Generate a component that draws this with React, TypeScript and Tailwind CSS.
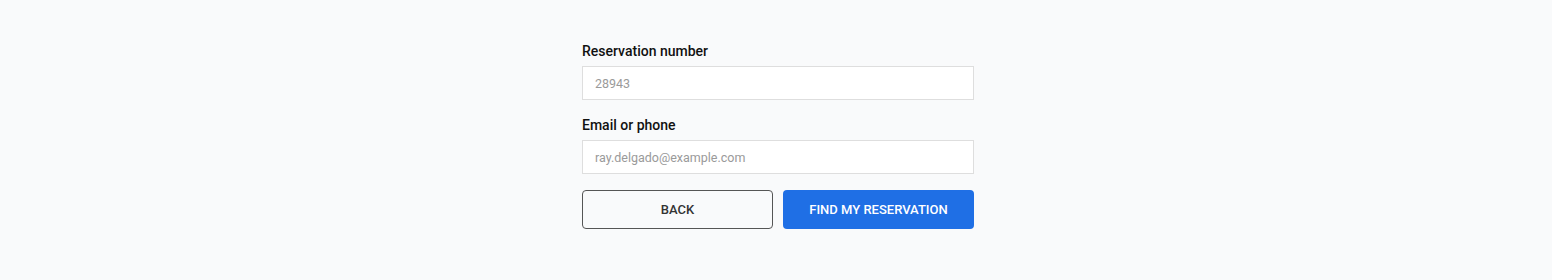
export default function App() {
  return (
    <div className="w-full h-[280px] bg-[#f9fafb] flex justify-center pt-[43px] pl-[4px]" style={{ fontFamily: "Roboto, 'Liberation Sans', sans-serif" }}>
      <form className="w-[392px] flex flex-col" onSubmit={(e) => e.preventDefault()}>
        <label className="text-[14px] font-medium text-[#111] leading-[16px]">Reservation number</label>
        <input
          type="text"
          placeholder="28943"
          className="mt-[7px] h-[34px] w-full bg-white border border-[#dedede] px-[12px] text-[12.5px] text-[#333] placeholder:text-[#9a9a9a] outline-none"
        />
        <label className="mt-[17px] text-[14px] font-medium text-[#111] leading-[16px]">Email or phone</label>
        <input
          type="text"
          placeholder="ray.delgado@example.com"
          className="mt-[7px] h-[34px] w-full bg-white border border-[#dedede] px-[12px] text-[12.5px] text-[#333] placeholder:text-[#9a9a9a] outline-none"
        />
        <div className="mt-[16px] grid grid-cols-2 gap-[10px]">
          <button type="button" className="h-[39px] rounded-[4px] border border-[#555] bg-transparent text-[13px] font-medium text-[#333] uppercase">
            Back
          </button>
          <button type="submit" className="h-[39px] rounded-[4px] bg-[#1f6fe5] text-[13px] font-medium text-white uppercase">
            Find my reservation
          </button>
        </div>
      </form>
    </div>
  );
}
